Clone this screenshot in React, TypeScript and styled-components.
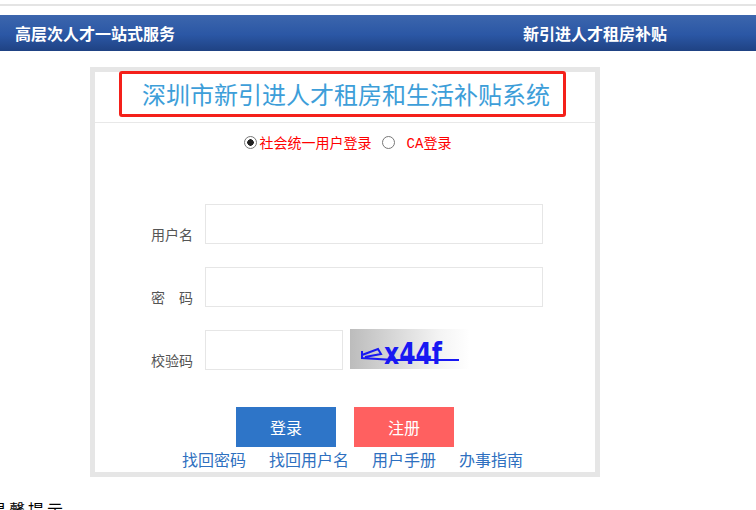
import { FC } from 'react';
import styled, { createGlobalStyle } from 'styled-components';

const GlobalStyle = createGlobalStyle`
    body {
        margin: 0;
        background: #fff;
        font-family: "Noto Sans CJK SC", "Noto Sans", sans-serif;
        overflow: hidden;
    }
`;

const TopRule = styled.div`
    margin-top: 4px;
    height: 2px;
    background-color: #e4e4e4;
`;

const Header = styled.div`
    margin-top: 9px;
    height: 36px;
    display: grid;
    grid-template-columns: 508px auto;
    align-items: center;
    padding-left: 15px;
    background: linear-gradient(#3c66ad, #2b57a5 55%, #1f4283);
`;

const HeaderTitle = styled.div`
    color: #fff;
    font-size: 16px;
    font-weight: bold;
    line-height: 20px;
`;

const Card = styled.div`
    margin: 16px 0 0 90px;
    width: 500px;
    height: 400px;
    border: solid 5px #e6e6e6;
    display: flex;
    flex-direction: column;
`;

const TitleBar = styled.div`
    height: 50px;
    border-bottom: solid 1px #e8e8e8;
    padding-left: 24px;
`;

const TitleBox = styled.div`
    margin-top: -1px;
    width: 421px;
    height: 40px;
    padding-left: 20px;
    border: solid 3px #f4201a;
    border-radius: 3px;
    color: #3d9ed9;
    font-size: 24px;
    line-height: 40px;
    white-space: nowrap;
`;

const RadioRow = styled.div`
    margin-top: 10px;
    padding-left: 5px;
    display: flex;
    justify-content: center;
    align-items: center;
    height: 18px;
    font-size: 14px;
    color: #f00;
`;

const Radio = styled.span<{ $checked?: boolean }>`
    width: 11px;
    height: 11px;
    border: solid 1px #777;
    border-radius: 50%;
    background: radial-gradient(circle, ${p => (p.$checked ? '#222 0 3px' : '#fff 0 3px')}, #fff 3.5px);
    margin-right: 3px;
`;

const RadioText = styled.span<{ $gap?: number }>`
    margin-right: ${p => p.$gap ?? 0}px;
`;

const Mono = styled.span`
    font-family: "Liberation Mono", monospace;
    margin-left: 9px;
`;

const Form = styled.div`
    margin-top: 53px;
    display: flex;
    flex-direction: column;
    gap: 23px;
`;

const FormRow = styled.div`
    display: grid;
    grid-template-columns: 98px auto;
    column-gap: 12px;
    height: 40px;
`;

const Label = styled.label`
    align-self: end;
    text-align: right;
    font-size: 14px;
    line-height: 20px;
    color: #555;
    white-space: pre;
`;

const Fields = styled.div`
    display: flex;
    gap: 7px;
`;

const Input = styled.input<{ $width: number }>`
    box-sizing: border-box;
    width: ${p => p.$width}px;
    height: 40px;
    border: solid 1px #e6e6e6;
    outline: none;
`;

const Captcha = styled.svg`
    margin-top: -1px;
    display: block;
`;

const Buttons = styled.div`
    margin-top: 37px;
    display: flex;
    justify-content: center;
    gap: 18px;
`;

const Button = styled.button<{ $color: string }>`
    width: 100px;
    height: 40px;
    border: none;
    background-color: ${p => p.$color};
    color: #fff;
    font-family: inherit;
    font-size: 16px;
`;

const Links = styled.div`
    margin-top: 2px;
    padding-left: 87px;
    display: flex;
    gap: 23px;
`;

const Link = styled.a`
    color: #2e70c0;
    font-size: 16px;
    line-height: 20px;
    text-decoration: none;
`;

const Notice = styled.div`
    margin-top: 22px;
    font-size: 16px;
    letter-spacing: 3px;
    line-height: 20px;
    text-indent: -10px;
    color: #000;
`;

const CaptchaImage: FC = () => (
    <Captcha width="120" height="40" viewBox="0 0 120 40">
        <defs>
            <linearGradient id="cg" x1="0" x2="1" y1="0" y2="0">
                <stop offset="0" stopColor="#bcbcbc" />
                <stop offset="0.75" stopColor="#f4f4f4" />
                <stop offset="1" stopColor="#fff" />
            </linearGradient>
        </defs>
        <rect width="120" height="40" fill="url(#cg)" />
        <text
            x="34"
            y="35"
            fill="#1818f2"
            fontFamily="DejaVu Sans"
            fontWeight="bold"
            fontSize="30"
            textLength="58"
            lengthAdjust="spacingAndGlyphs"
        >
            x44f
        </text>
        <path
            d="M12 22 L12 29 L44 31 M12 26 L28 20 L31 25 L15 28 M40 31 L109 31"
            stroke="#1818f2"
            strokeWidth="2"
            fill="none"
        />
    </Captcha>
);

const App: FC = () => (
    <>
        <GlobalStyle />
        <TopRule />
        <Header>
            <HeaderTitle>高层次人才一站式服务</HeaderTitle>
            <HeaderTitle>新引进人才租房补贴</HeaderTitle>
        </Header>
        <Card>
            <TitleBar>
                <TitleBox>深圳市新引进人才租房和生活补贴系统</TitleBox>
            </TitleBar>
            <RadioRow>
                <Radio $checked />
                <RadioText $gap={10}>社会统一用户登录</RadioText>
                <Radio />
                <RadioText>
                    <Mono>CA</Mono>登录
                </RadioText>
            </RadioRow>
            <Form>
                <FormRow>
                    <Label>用户名</Label>
                    <Fields>
                        <Input $width={338} />
                    </Fields>
                </FormRow>
                <FormRow>
                    <Label>密　码</Label>
                    <Fields>
                        <Input $width={338} type="password" />
                    </Fields>
                </FormRow>
                <FormRow>
                    <Label>校验码</Label>
                    <Fields>
                        <Input $width={138} />
                        <CaptchaImage />
                    </Fields>
                </FormRow>
            </Form>
            <Buttons>
                <Button $color="#2e75c8">登录</Button>
                <Button $color="#ff6060">注册</Button>
            </Buttons>
            <Links>
                <Link>找回密码</Link>
                <Link>找回用户名</Link>
                <Link>用户手册</Link>
                <Link>办事指南</Link>
            </Links>
        </Card>
        <Notice>温馨提示</Notice>
    </>
);

export default App;
